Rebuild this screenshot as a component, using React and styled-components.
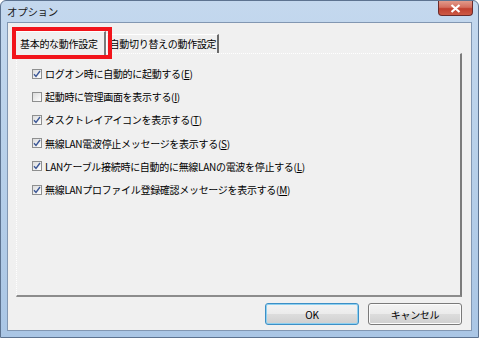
import React from 'react';
import styled, { createGlobalStyle } from 'styled-components';

const GlobalStyle = createGlobalStyle`
  html, body {
    margin: 0;
    padding: 0;
    width: 479px;
    height: 338px;
    overflow: hidden;
    background: #ffffff;
  }
`

const Window = styled.div`
  position: relative;
  width: 479px;
  height: 338px;
  box-sizing: border-box;
  display: flex;
  flex-direction: column;
  border: 1px solid #5d7390;
  border-radius: 6px 6px 0 0;
  background: linear-gradient(180deg, #c4d8ee 0%, #b9d1ea 40%, #aac6e5 100%);
  font-family: "Noto Sans CJK JP", "Noto Sans", sans-serif;
  color: #000;
`

const TitleBar = styled.div`
  height: 21px;
  display: flex;
  align-items: flex-start;
  padding-left: 6px;
  flex-shrink: 0;
`

const Title = styled.div`
  font-size: 10.5px;
  line-height: 1;
  margin-top: 6px;
  color: #1a1a1a;
  letter-spacing: -0.3px;
`

const CloseButton = styled.div`
  margin-left: auto;
  margin-right: 5px;
  width: 35px;
  height: 15px;
  box-sizing: border-box;
  border: 1px solid #6b2b2b;
  border-top: none;
  border-radius: 0 0 4px 4px;
  background: linear-gradient(180deg, #e19a8a 0%, #d46e5e 45%, #c0402f 55%, #cd5a45 100%);
  display: flex;
  align-items: center;
  justify-content: center;
`

const Client = styled.div`
  flex: 1;
  margin: 0 6px 6px 6px;
  border: 1px solid #8297b2;
  background: #f0f0f0;
  display: flex;
  flex-direction: column;
  padding: 0 9px 0 8px;
  box-sizing: border-box;
`

const TabStrip = styled.div`
  height: 30px;
  display: flex;
  align-items: flex-end;
  position: relative;
  z-index: 1;
`

const Tab = styled.div`
  box-sizing: border-box;
  font-size: 10px;
  letter-spacing: -0.3px;
  line-height: 1;
  white-space: nowrap;
  display: flex;
  align-items: center;
  background: #f0f0f0;
  border-top: 1px solid #ffffff;
  border-left: 1px solid #ffffff;
  border-right: 2px solid ${p => (p.$active ? '#7a7a7a' : '#6a6a6a')};
  height: ${p => (p.$active ? '24px' : '19px')};
  padding: ${p => (p.$active ? '0 6px 0 4px' : '0 1px 0 3px')};
  margin-bottom: ${p => (p.$active ? '-2px' : '0')};
  margin-left: ${p => (p.$active ? '-1px' : '0')};
`

const Panel = styled.div`
  height: 244px;
  box-sizing: border-box;
  border-top: 1px dotted #ffffff;
  border-left: 1px dotted #ffffff;
  border-right: 2px solid #7c7c7c;
  border-bottom: 2px solid #8c8c8c;
  padding: 8px 0 0 15px;
  display: flex;
  flex-direction: column;
`

const Row = styled.label`
  display: flex;
  align-items: center;
  height: 23.2px;
  font-size: 10px;
  letter-spacing: -0.3px;
  white-space: nowrap;
`

const Box = styled.span`
  width: 10px;
  height: 10px;
  box-sizing: border-box;
  border: 1px solid #8e8f8f;
  background: linear-gradient(135deg, #dcdcdc 0%, #f4f4f4 70%, #ffffff 100%);
  margin-right: 3px;
  display: flex;
  align-items: center;
  justify-content: center;
  flex-shrink: 0;
`

const Key = styled.span`
  text-decoration: underline;
`

const Footer = styled.div`
  display: flex;
  justify-content: flex-end;
  gap: 9px;
  padding-top: 6px;
`

const Button = styled.div`
  width: 94px;
  height: 22px;
  box-sizing: border-box;
  border: 1px solid ${p => (p.$default ? '#3c8fc6' : '#7a7a7a')};
  border-radius: 3px;
  background: linear-gradient(180deg, #f3f3f3 0%, #ebebeb 48%, #dcdcdc 52%, #cfcfcf 100%);
  box-shadow: ${p => (p.$default ? 'inset 0 0 0 1px #8ed0f0' : 'inset 0 0 0 1px #fbfbfb')};
  display: flex;
  align-items: center;
  justify-content: center;
  font-size: 10px;
  letter-spacing: -0.3px;
`

const Highlight = styled.div`
  position: absolute;
  left: 11px;
  top: 26px;
  width: 100px;
  height: 32px;
  box-sizing: border-box;
  border: 4px solid #f2141b;
  z-index: 5;
  pointer-events: none;
`

const Check = () => (
  <svg width="8" height="8" viewBox="0 0 8 8">
    <path d="M1 4.2 L3 6.4 L7 1" fill="none" stroke="#3b5796" strokeWidth="1.4" />
  </svg>
)

const options = [
  { checked: true, text: 'ログオン時に自動的に起動する', key: 'E' },
  { checked: false, text: '起動時に管理画面を表示する', key: 'I' },
  { checked: true, text: 'タスクトレイアイコンを表示する', key: 'T' },
  { checked: true, text: '無線LAN電波停止メッセージを表示する', key: 'S' },
  { checked: true, text: 'LANケーブル接続時に自動的に無線LANの電波を停止する', key: 'L' },
  { checked: true, text: '無線LANプロファイル登録確認メッセージを表示する', key: 'M' },
]

export default function App() {
  return (
    <>
      <GlobalStyle />
      <Window>
        <TitleBar>
          <Title>オプション</Title>
          <CloseButton>
            <svg width="11" height="9" viewBox="0 0 11 9">
              <path d="M1.5 1 L9.5 8 M9.5 1 L1.5 8" stroke="#ffffff" strokeWidth="2.2" />
            </svg>
          </CloseButton>
        </TitleBar>
        <Client>
          <TabStrip>
            <Tab $active>基本的な動作設定</Tab>
            <Tab>自動切り替えの動作設定</Tab>
          </TabStrip>
          <Panel>
            {options.map(o => (
              <Row key={o.key}>
                <Box>{o.checked && <Check />}</Box>
                <span>
                  {o.text}(<Key>{o.key}</Key>)
                </span>
              </Row>
            ))}
          </Panel>
          <Footer>
            <Button $default>OK</Button>
            <Button>キャンセル</Button>
          </Footer>
        </Client>
        <Highlight />
      </Window>
    </>
  )
}
